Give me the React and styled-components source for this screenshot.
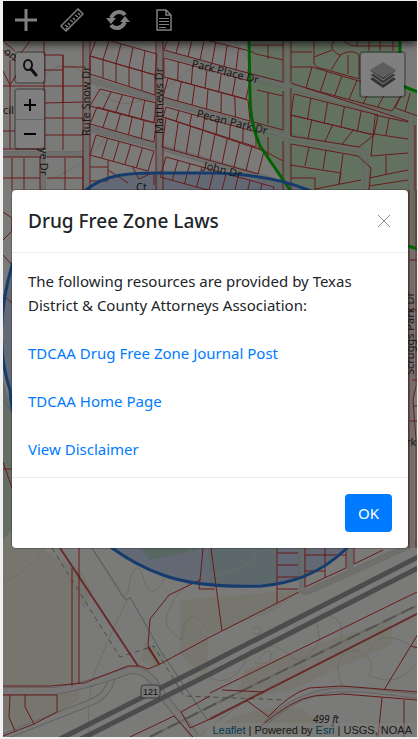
import React from "react";
import styled, { createGlobalStyle } from "styled-components";

const GlobalStyle = createGlobalStyle`
  *, *::before, *::after { box-sizing: border-box; }
  body { margin: 0; background: #f0f0f0; font-family: "Noto Sans", "Open Sans", sans-serif; }
`;

const Frame = styled.div`
  min-height: 100vh;
  padding: 1px 1px 2px 3px;
  display: flex;
`;

const AppShell = styled.div`
  position: relative;
  flex: 1;
  min-width: 0;
  display: flex;
  flex-direction: column;
  overflow: hidden;
`;

const Toolbar = styled.header`
  position: relative;
  z-index: 2;
  height: 40px;
  display: flex;
  align-items: center;
  background: #000;
  box-shadow: 0 3px 8px rgba(0, 0, 0, 0.7);
`;

const ToolButton = styled.button`
  width: 46px;
  height: 40px;
  padding: 0 0 3px;
  border: 0;
  background: none;
  color: #fff;
  display: flex;
  align-items: center;
  justify-content: center;
`;

const MapArea = styled.main`
  position: relative;
  flex: 1;
  display: flex;
  flex-direction: column;
  justify-content: space-between;
  background: #f5f4f0;
`;

const MapDrawing = styled.svg`
  position: absolute;
  inset: 0;
  width: 100%;
  height: 100%;
`;

const Controls = styled.div`
  position: relative;
  display: flex;
  justify-content: space-between;
  align-items: flex-start;
  padding: 10px 11px;
`;

const ControlColumn = styled.div`
  display: flex;
  flex-direction: column;
  gap: 4px;
`;

const ControlBar = styled.div`
  display: flex;
  flex-direction: column;
  border: 2px solid rgba(0, 0, 0, 0.25);
  border-radius: 4px;
  background: #fff;
  background-clip: padding-box;
`;

const ControlButton = styled.button`
  width: ${(p) => (p.$large ? 43 : 28)}px;
  height: ${(p) => (p.$large ? 43 : 29)}px;
  padding: 0;
  border: 0;
  background: none;
  color: #000;
  display: flex;
  align-items: center;
  justify-content: center;
  & + & { border-top: 1px solid #ccc; }
`;

const Attribution = styled.footer`
  position: relative;
  align-self: flex-end;
  padding: 0 5px;
  background: rgba(255, 255, 255, 0.5);
  color: #333;
  font: 11px/14px "Liberation Sans", Arial, sans-serif;
  white-space: nowrap;
  a { color: #0078a8; text-decoration: none; }
`;

const Backdrop = styled.div`
  position: absolute;
  inset: 0;
  z-index: 3;
  padding: 8px;
  display: flex;
  align-items: center;
  justify-content: center;
  background: rgba(0, 0, 0, 0.5);
`;

const Dialog = styled.section`
  width: 100%;
  max-width: 500px;
  border: 1px solid rgba(0, 0, 0, 0.2);
  border-radius: 5px;
  background: #fff;
  background-clip: padding-box;
  color: #212529;
  font-size: 15px;
  line-height: 24px;
`;

const DialogHeader = styled.div`
  display: flex;
  align-items: center;
  justify-content: space-between;
  padding: 16px;
  border-bottom: 1px solid #e9ecef;
`;

const DialogTitle = styled.h1`
  margin: 0;
  font-size: 19px;
  line-height: 30px;
  font-weight: 500;
`;

const CloseButton = styled.button`
  width: 16px;
  height: 30px;
  padding: 0;
  border: 0;
  background: none;
  color: #8c8c8c;
  display: flex;
  align-items: center;
  justify-content: center;
`;

const DialogBody = styled.div`
  display: flex;
  flex-direction: column;
  align-items: flex-start;
  gap: 24px;
  padding: 16px;
`;

const Intro = styled.p`
  margin: 0;
`;

const ResourceLink = styled.a`
  color: #007bff;
  text-decoration: none;
`;

const DialogFooter = styled.div`
  display: flex;
  justify-content: flex-end;
  padding: 16px;
  border-top: 1px solid #e9ecef;
`;

const PrimaryButton = styled.button`
  min-width: 47px;
  height: 38px;
  padding: 0 12px;
  border: 0;
  border-radius: 4px;
  background: #007bff;
  color: #fff;
  font: 15px/24px "Noto Sans", "Open Sans", sans-serif;
`;

/* A row of parcels between two edges, cut into n lots by cross lines. */
function lots([ax, ay, bx, by], [cx, cy, dx, dy], n) {
  let d = `M${ax} ${ay}L${bx} ${by}L${dx} ${dy}L${cx} ${cy}Z`;
  for (let i = 1; i < n; i++) {
    const t = i / n;
    d += `M${ax + (bx - ax) * t} ${ay + (by - ay) * t}L${cx + (dx - cx) * t} ${cy + (dy - cy) * t}`;
  }
  return d;
}

const parcelRows = [
  [[97, 37, 157, 54], [90, 56, 155, 75], 5],
  [[90, 56, 155, 75], [90, 74, 155, 95], 5],
  [[100, 89, 156, 103], [90, 106, 154, 123], 5],
  [[97, 107, 156, 123], [90, 124, 154, 142], 5],
  [[96, 135, 154, 151], [90, 155, 148, 171], 5],
  [[170, 31, 250, 51], [164, 50, 248, 73], 7],
  [[164, 58, 250, 81], [164, 77, 246, 99], 6],
  [[168, 78, 248, 100], [163, 97, 250, 121], 6],
  [[166, 107, 256, 132], [163, 117, 256, 147], 7],
  [[166, 118, 264, 151], [162, 147, 258, 174], 8],
  [[166, 157, 274, 187], [160, 177, 270, 207], 9],
  [[312, 67, 402, 94], [306, 88, 392, 111], 6],
  [[294, 94, 378, 115], [291, 115, 374, 135], 5],
  [[291, 115, 374, 135], [291, 136, 359, 147], 4],
];

const parcelLines = `
M44 41V149H3M63 55V150M44 55H63V102M44 70H63M63 67H83M3 86H83M45 103L83 102M45 118H83M45 135H83
M3 41L15 51M30 41L15 61L3 50M3 71L10 85L24 63M10 60V149M3 131H15
M3 157H40V190M47 157H83V190M12 158V190M24 158V190M3 178H40M65 158V190M47 178H83
M83 41V190M90 41V190M90 167H108M108 160V180M90 181H108M108 170L128 183M132 166L139 179L154 172V185
M156 41V190M163 41V190M283 41V82M291 41V82M251 45H283M268 45V59M256 54L283 60M291 52H312M291 67H312
M248 73L283 82M250 51L256 54
M314 41V63Q315 68 324 69L359 79V55Q354 49 341 54L331 70M314 57L332 50M334 41Q327 49 341 56
M344 41Q349 46 357 46H400M357 41V46M369 41V51M380 41V51M393 41V51M348 55V74
M291 83L408 121M374 115L408 122
M283 91V130M291 88V136M268 93V124M257 90L283 96M250 121L283 130M268 137V157M257 147L283 161M283 141V190M291 144V190
M291 144L358 156L371 168L369 190M291 178H315V190M315 189L361 180M341 173L339 184M309 147L305 166M326 150L323 169M343 154L339 184M290 165L341 173
M371 156L408 153M386 156V174M369 178L408 170M369 186L408 180M375 117L371 156M389 118L386 135M374 134L408 139
M401 96L395 108L418 116M410 93L405 112M415 125V190
M3 212L12 218V231L3 240M3 255L12 265M3 295L12 303M3 469H12M3 462L12 488
M409 190V548M416 190V386L413 400L416 440V548M409 260H418M409 310H418M412 380H418M413 406H418M410 421H418
M79 548V684M72 568V686
M3 686H50L84 683L128 666H140L148 669L160 664L210 637L299 592
M3 695H57V712L34 724L3 736M10 695L9 717L15 731M25 695V707L34 724
M203 548L200 580L169 595L150 619L148 645L159 664M200 579L199 589H215M211 548L222 631
M277 548V603M277 553H298M277 565H298M277 577H298M277 589H298M305 548V587L346 568V548M305 555H346M325 548V578M305 571H325
M354 548V564L383 550M210 693L417 592M222 690L264 692M246 700L269 717M384 690L418 634M411 646L418 648
M130 737L174 716L193 737M181 712L190 728L210 719M181 712L210 696
M268 717Q289 694 309 688L342 686L418 692M260 727Q292 699 314 696L343 694L418 700M382 698L378 737M404 700V737
`;

const roads = `M86 41V190M160 41V190M287 41V190M3 154H86M90 80L160 100L287 136L359 150Q369 153 366 190
M90 129L160 147L285 184M163 53L287 86L408 120M411 110V548M43 154V190
M302 548V588Q303 594 309 591L418 542M350 548V570`;

const contours = `M3 583Q30 570 45 548M92 548L127 600Q105 645 92 680Q86 720 90 737
M123 594Q128 600 130 580Q138 555 144 580Q150 600 162 583Q175 555 184 572Q198 575 190 548
M208 630Q185 600 182 640Q166 630 166 620Q175 580 215 575Q260 565 256 548
M210 678Q235 690 250 650Q275 640 288 655Q303 670 320 640Q310 600 338 620Q350 640 325 650
M342 685Q330 655 355 650Q380 660 368 675Q400 690 418 660M370 650Q380 625 418 650
M45 75Q70 50 100 90T210 50M48 180Q90 165 110 130M235 41Q255 80 308 59T380 60
M3 515Q12 500 12 490M260 700Q270 680 240 705Q190 740 202 737M251 630q8-6 10 0t-8 3
M258 660q12-15 13-5t-16 8M382 120Q377 140 386 160T381 190`;

const bufferOutline =
  "M86 190C105 174 130 173 155 173H209Q270 174 308 190C390 220 406 280 402 370C398 460 382 520 347 548C318 576 290 583 262 586Q198 588 163 575Q137 566 112 548C50 500 12 440 10 390Q-8 335 12 265C25 230 55 205 86 190Z";

function TownMap() {
  return (
    <MapDrawing viewBox="3 41 414 696" preserveAspectRatio="xMinYMin slice" role="img" aria-label="Street map with parcels">
      <g fill="#eeeddc">
        <path d="M3 480H12V548L40 548L79 570V685H3Z" />
        <path d="M80 570L93 592L85 610L79 600ZM145 642L165 655L159 668L140 660ZM180 600L300 590L277 610L208 635V680L180 655ZM245 670L330 640L392 620V645L290 690L235 700Z" />
        <path d="M3 695H57L78 686L80 700L40 724L3 730Z" />
        <path d="M210 737Q230 705 300 708L345 737Z" />
      </g>
      <path d="M248 41L249 96Q249 123 260 146L290 190L408 246L418 248V93L400 87V41Z" fill="#c6e2c2" />
      <path d={bufferOutline} fill="#c6d2e8" />
      <path d="M140 548L150 560L198 550V548Z" fill="#b2cec6" />
      <path d="M208 548H277V583L210 586Z" fill="#bbd1d4" />
      <path d="M3 380L12 410V530L3 540Z" fill="#ccdacb" />
      <g fill="none" strokeLinejoin="round">
        <path d={contours} stroke="#dad9cd" strokeWidth="1" />
        <path d={roads} stroke="#b9bdb4" strokeWidth="6" opacity="0.5" />
        <path d={roads} stroke="#e9ebe6" strokeWidth="4" opacity="0.4" />
        <g stroke="#c6c5c0">
          <path d="M112 678Q108 695 92 702L3 737" strokeWidth="7" />
          <path d="M112 678Q108 695 92 702L3 737" stroke="#f3f2ee" strokeWidth="5" />
          <path d="M3 691H55Q90 685 130 670Q149 669 160 692L196 737" strokeWidth="8" />
          <path d="M3 691H55Q90 685 130 670Q149 669 160 692L196 737" stroke="#f0efec" strokeWidth="6" />
          <path d="M265 724Q295 694 335 690H362L418 696" strokeWidth="5" />
          <path d="M265 724Q295 694 335 690H362L418 696" stroke="#f0efec" strokeWidth="3" />
        </g>
        <path d="M92 548L123 597Q128 602 130 597L160 650L208 721M3 400L12 412" stroke="#94c1b6" />
        <path d="M52 548L120 657L154 646L162 660L184 696L286 700" stroke="#96968e" strokeDasharray="5 4" />
        <path d="M150 737L215 704L418 605" stroke="#d3d0c5" strokeWidth="2" />
        <path d="M150 737L215 704L418 605" stroke="#a8a69a" strokeWidth="2" strokeDasharray="14 6" />
        <path d={parcelLines} stroke="#cf3535" strokeWidth="1" />
        <path d={parcelRows.map((row) => lots(...row)).join("")} stroke="#cf3535" strokeWidth="1" />
        <path d="M60 548L138 666M210 719L417 614M148 647L159 664" stroke="#c43232" strokeWidth="2" opacity="0.8" />
        <path d="M60 739L210 663L420 556" stroke="#989898" strokeWidth="5" />
        <path d="M77 741L210 674L420 567" stroke="#989898" strokeWidth="5" />
        <path d="M249 41L250 96Q250 123 260 146L290 190M408 246L418 249M400 41V60M400 85L418 92" stroke="#00c400" strokeWidth="3" />
        <path d={bufferOutline} stroke="#2d78dc" strokeWidth="3" />
      </g>
      <g fontFamily="Noto Sans, sans-serif" fontSize="11" fill="#333">
        <text transform="translate(191 67) rotate(14)">Park Place Dr</text>
        <text transform="translate(196 117) rotate(14)">Pecan Park Dr</text>
        <text transform="translate(203 169) rotate(14)">John Dr</text>
        <text transform="translate(90 136) rotate(-90)">Rufe Snow Dr</text>
        <text transform="translate(163 134) rotate(-90)">Matthews Dr</text>
        <text transform="translate(40 148) rotate(90)">ye Dr</text>
        <text transform="translate(414 375) rotate(-90)">Scruggs Park Dr</text>
        <text x="3" y="114">cil</text>
        <text transform="translate(3 53) rotate(38)">on</text>
        <text x="136" y="191">Ct</text>
        <text x="406" y="446">rk</text>
        <text x="313" y="723" fontSize="10" fontStyle="italic">499 ft</text>
      </g>
      <rect x="141" y="685" width="19" height="13" rx="3" fill="#eee" stroke="#777" />
      <text x="143" y="695" fontFamily="Liberation Sans" fontSize="9" fill="#222">121</text>
    </MapDrawing>
  );
}

const PlusIcon = () => (
  <svg width="22" height="22" viewBox="0 0 22 22" aria-hidden="true">
    <path d="M11 0V22M0 11H22" stroke="currentColor" strokeWidth="3" />
  </svg>
);

const RulerIcon = () => (
  <svg width="24" height="24" viewBox="0 0 24 24" fill="none" stroke="currentColor" aria-hidden="true">
    <path d="M1 18L18 1L23 6L6 23Z" strokeWidth="1.5" />
    <path d="M6 20L8 22M5 17L8 19M8 15L10 17M10 12L13 14M13 10L15 12M15 7L18 9M18 5L20 7" strokeWidth="1.5" />
  </svg>
);

const RefreshIcon = () => (
  <svg width="24" height="22" viewBox="0 0 24 22" aria-hidden="true">
    <path d="M5 9Q8 3 13 3Q17 3 19 6M19 13Q16 19 11 19Q7 19 5 16" fill="none" stroke="currentColor" strokeWidth="4" />
    <path d="M0 9H10L5 15ZM14 13H24L19 7Z" fill="currentColor" />
  </svg>
);

const DocumentIcon = () => (
  <svg width="18" height="22" viewBox="0 0 18 22" fill="none" stroke="currentColor" aria-hidden="true">
    <path d="M2 1H11L16 6V21H2ZM11 1V6H16" strokeWidth="1.5" />
    <path d="M4 9.5H14M4 12.5H14M4 15.5H14M4 18.5H11" />
  </svg>
);

const SearchIcon = () => (
  <svg width="18" height="20" viewBox="0 0 18 20" fill="none" stroke="#222" aria-hidden="true">
    <ellipse cx="7" cy="7" rx="4" ry="5" strokeWidth="2" />
    <path d="M10 11L15 17" strokeWidth="3" strokeLinecap="round" />
  </svg>
);

const SignIcon = ({ plus }) => (
  <svg width="14" height="14" viewBox="0 0 14 14" aria-hidden="true">
    <path d={plus ? "M7 1V13M1 7H13" : "M1 7H13"} stroke="currentColor" strokeWidth="2" />
  </svg>
);

const LayersIcon = () => (
  <svg width="28" height="28" viewBox="0 0 28 28" aria-hidden="true">
    <path d="M1 18L14 10L27 18L14 27Z" fill="#666" />
    <path d="M1 14L14 6L27 14L14 23Z" fill="#777" stroke="#eee" strokeWidth="1" />
    <path d="M1 10L14 2L27 10L14 19Z" fill="#707070" stroke="#eee" strokeWidth="1" />
    <path d="M1 9L14 1L27 9L14 17Z" fill="#bcbcbc" />
  </svg>
);

const CloseIcon = () => (
  <svg width="14" height="14" viewBox="0 0 14 14" aria-hidden="true">
    <path d="M1 1L13 13M13 1L1 13" stroke="currentColor" strokeWidth="1" />
  </svg>
);

const tools = [
  ["Add", PlusIcon],
  ["Measure", RulerIcon],
  ["Refresh", RefreshIcon],
  ["Laws", DocumentIcon],
];

const resources = ["TDCAA Drug Free Zone Journal Post", "TDCAA Home Page", "View Disclaimer"];

export default function App() {
  return (
    <>
      <GlobalStyle />
      <Frame>
        <AppShell>
          <Toolbar>
            {tools.map(([label, Icon]) => (
              <ToolButton key={label} type="button" aria-label={label}><Icon /></ToolButton>
            ))}
          </Toolbar>
          <MapArea>
            <TownMap />
            <Controls>
              <ControlColumn>
                <ControlBar>
                  <ControlButton type="button" aria-label="Search"><SearchIcon /></ControlButton>
                </ControlBar>
                <ControlBar>
                  <ControlButton type="button" aria-label="Zoom in"><SignIcon plus /></ControlButton>
                  <ControlButton type="button" aria-label="Zoom out"><SignIcon /></ControlButton>
                </ControlBar>
              </ControlColumn>
              <ControlBar>
                <ControlButton $large type="button" aria-label="Layers"><LayersIcon /></ControlButton>
              </ControlBar>
            </Controls>
            <Attribution>
              <a href="#leaflet">Leaflet</a> | Powered by <a href="#esri">Esri</a> | USGS, NOAA
            </Attribution>
          </MapArea>
          <Backdrop>
            <Dialog role="dialog" aria-modal="true" aria-labelledby="dialog-title">
              <DialogHeader>
                <DialogTitle id="dialog-title">Drug Free Zone Laws</DialogTitle>
                <CloseButton type="button" aria-label="Close"><CloseIcon /></CloseButton>
              </DialogHeader>
              <DialogBody>
                <Intro>The following resources are provided by Texas District &amp; County Attorneys Association:</Intro>
                {resources.map((label) => (
                  <ResourceLink key={label} href="#resource">{label}</ResourceLink>
                ))}
              </DialogBody>
              <DialogFooter>
                <PrimaryButton type="button">OK</PrimaryButton>
              </DialogFooter>
            </Dialog>
          </Backdrop>
        </AppShell>
      </Frame>
    </>
  );
}
